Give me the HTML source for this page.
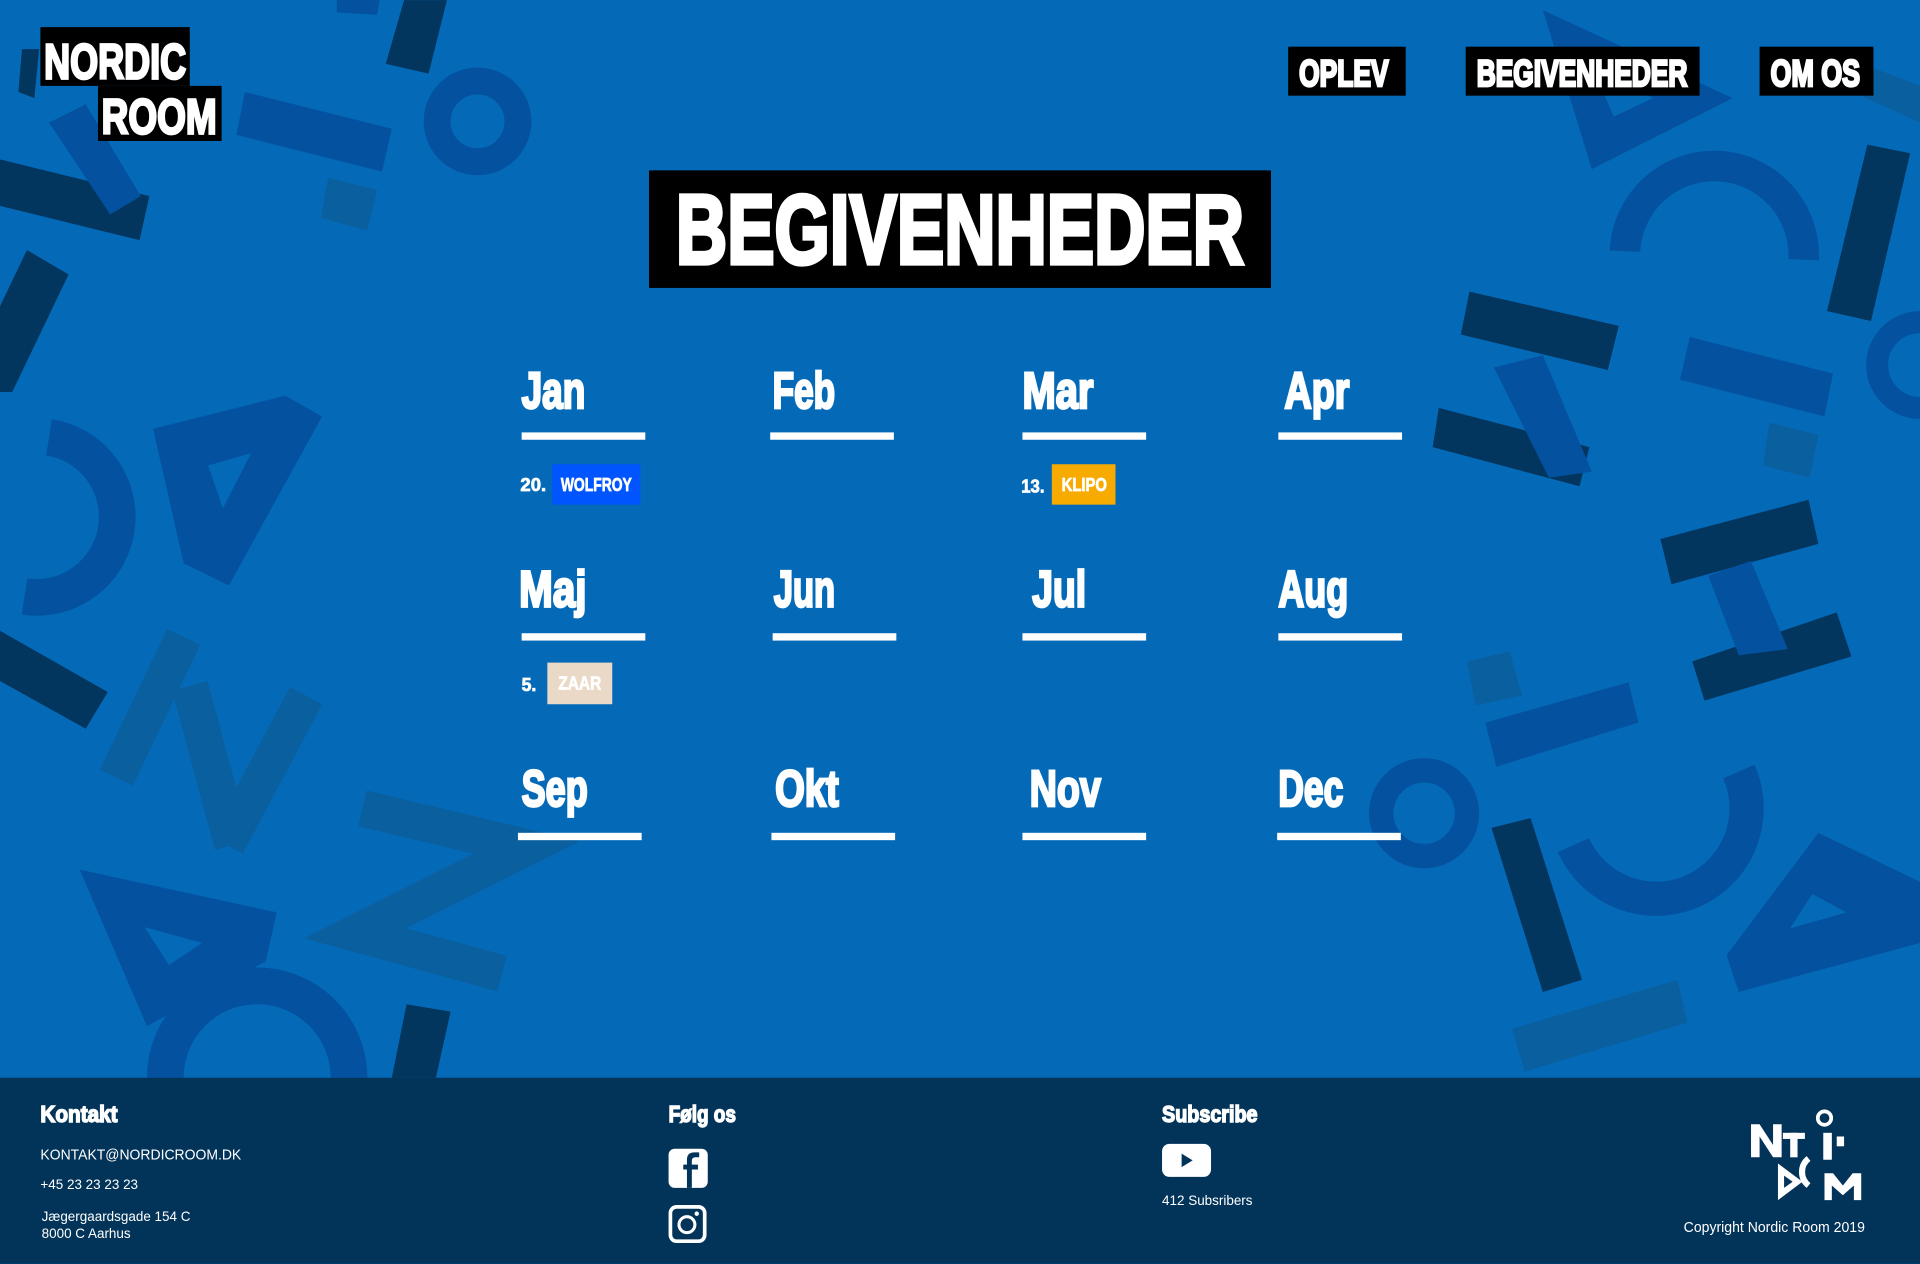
<!DOCTYPE html>
<html><head><meta charset="utf-8"><style>
html,body{margin:0;padding:0;width:1920px;height:1264px;overflow:hidden;background:#046ab8}
svg{display:block}
text{font-family:"Liberation Sans",sans-serif}
.b{font-weight:bold;fill:#fff;stroke:#fff;stroke-width:1.2;paint-order:stroke}
.h{stroke-width:2.2}
.s{stroke-width:0.6}
</style></head><body>
<svg width="1920" height="1264" viewBox="0 0 1568 1032" xmlns="http://www.w3.org/2000/svg">
<rect width="1568" height="1032" fill="#046ab8"/>
<g fill="#03365f">
<polygon points="330,0 365,0 350,60 315,52"/>
<polygon points="0,130 122,160 114,196 0,168"/>
<polygon points="22,204 56,224 10,320 0,320 0,250"/>
<polygon points="0,515 88,565 70,595 0,556"/>
<polygon points="332,820 368,826 356,880 320,880"/>
<polygon points="1525,118 1560,125 1528,262 1492,254"/>
<polygon points="1200,238 1322,266 1313,302 1193,273"/>
<polygon points="1175,333 1298,365 1290,397 1170,365"/>
<polygon points="1356,440 1477,408 1485,444 1365,477"/>
<polygon points="1382,540 1500,500 1512,536 1392,572"/>
<polygon points="1218,676 1250,668 1292,800 1260,810"/>
<polygon points="18,40 32,40 28,80 15,75"/>
</g>
<g fill="#04529f">
<polygon points="275,0 310,0 308,12 275,10"/>
<polygon points="200,75 320,105 312,140 193,110"/>
<polygon points="40,100 70,85 115,160 90,175"/>
<path fill-rule="evenodd" d="M125,350 L233,323 L263,340 L187,478 L150,460 Z M170,380 L205,370 L182,415 Z"/>
<path fill-rule="evenodd" d="M65,710 L226,745 L217,785 L120,838 Z M118,757 L165,770 L138,788 Z"/>
<path fill-rule="evenodd" d="M1260,8 L1415,80 L1300,138 Z M1300,55 L1350,80 L1318,95 Z"/>
<polygon points="1380,275 1497,305 1490,340 1372,310"/>
<polygon points="1213,590 1330,557 1338,590 1222,626"/>
<polygon points="1220,300 1260,290 1300,385 1265,390"/>
<polygon points="1395,470 1430,458 1460,530 1420,535"/>
<path fill-rule="evenodd" d="M1410,780 L1485,680 L1568,720 L1568,770 L1420,810 Z M1462,758 L1480,730 L1508,745 Z"/>
</g>
<g fill="none" stroke="#04529f">
<circle cx="390" cy="99" r="33" stroke-width="22"/>
<path d="M40,357 A65,65 0 0 1 20,487" stroke-width="30"/>
<path d="M135,880 A75,75 0 0 1 285,880" stroke-width="30"/>
<path d="M1327,205 A73,73 0 0 1 1473,212" stroke-width="25"/>
<circle cx="1568" cy="298" r="35" stroke-width="18"/>
<circle cx="1163" cy="664" r="35" stroke-width="20"/>
<path d="M1420,630 A70,70 0 0 1 1285,690" stroke-width="28"/>
</g>
<g fill="#0a5f9e">
<polygon points="268,145 308,155 300,188 262,178"/>
<polygon points="1445,345 1485,355 1478,390 1440,380"/>
<polygon points="1198,540 1233,532 1243,568 1205,576"/>
<polygon points="1490,40 1568,70 1568,100 1480,60"/>
<polygon points="1235,840 1370,800 1378,835 1245,875"/>
</g>
<g fill="none" stroke="#0a5f9e" stroke-width="30">
<path d="M150,520 L95,635"/><path d="M155,560 L190,690"/><path d="M250,568 L185,690"/>
<path d="M296,660 L430,692 L290,762 L410,795"/>
</g>

<rect x="33" y="22" width="122" height="48" fill="#000"/>
<rect x="80" y="70" width="101" height="45" fill="#000"/>
<text class="b h" x="36" y="64" font-size="40" textLength="116" lengthAdjust="spacingAndGlyphs">NORDIC</text>
<text class="b h" x="83" y="109" font-size="40" textLength="94" lengthAdjust="spacingAndGlyphs">ROOM</text>

<rect x="1052" y="38" width="96" height="40" fill="#000"/>
<text class="b h" x="1061" y="70" font-size="30" textLength="73" lengthAdjust="spacingAndGlyphs">OPLEV</text>
<rect x="1197" y="38" width="191" height="40" fill="#000"/>
<text class="b h" x="1206" y="70" font-size="30" textLength="172" lengthAdjust="spacingAndGlyphs">BEGIVENHEDER</text>
<rect x="1437" y="38" width="93" height="40" fill="#000"/>
<text class="b h" x="1446" y="70" font-size="30" textLength="73" lengthAdjust="spacingAndGlyphs">OM OS</text>

<rect x="530" y="139" width="508" height="96" fill="#000"/>
<text class="b" style="stroke-width:3.5" x="552" y="215" font-size="80" textLength="464" lengthAdjust="spacingAndGlyphs">BEGIVENHEDER</text>

<g>
<text class="b h" x="426" y="333" font-size="42" textLength="52" lengthAdjust="spacingAndGlyphs">Jan</text>
<text class="b h" x="631" y="333" font-size="42" textLength="51" lengthAdjust="spacingAndGlyphs">Feb</text>
<text class="b h" x="835" y="333" font-size="42" textLength="58" lengthAdjust="spacingAndGlyphs">Mar</text>
<text class="b h" x="1049" y="333" font-size="42" textLength="53" lengthAdjust="spacingAndGlyphs">Apr</text>
<text class="b h" x="424" y="495" font-size="42" textLength="55" lengthAdjust="spacingAndGlyphs">Maj</text>
<text class="b h" x="632" y="495" font-size="42" textLength="50" lengthAdjust="spacingAndGlyphs">Jun</text>
<text class="b h" x="843" y="495" font-size="42" textLength="44" lengthAdjust="spacingAndGlyphs">Jul</text>
<text class="b h" x="1044" y="495" font-size="42" textLength="57" lengthAdjust="spacingAndGlyphs">Aug</text>
<text class="b h" x="426" y="658" font-size="42" textLength="54" lengthAdjust="spacingAndGlyphs">Sep</text>
<text class="b h" x="633" y="658" font-size="42" textLength="52" lengthAdjust="spacingAndGlyphs">Okt</text>
<text class="b h" x="841" y="658" font-size="42" textLength="58" lengthAdjust="spacingAndGlyphs">Nov</text>
<text class="b h" x="1044" y="658" font-size="42" textLength="53" lengthAdjust="spacingAndGlyphs">Dec</text>
</g>
<g fill="#fff">
<rect x="426" y="353" width="101" height="6"/><rect x="629" y="353" width="101" height="6"/><rect x="835" y="353" width="101" height="6"/><rect x="1044" y="353" width="101" height="6"/>
<rect x="426" y="517" width="101" height="6"/><rect x="631" y="517" width="101" height="6"/><rect x="835" y="517" width="101" height="6"/><rect x="1044" y="517" width="101" height="6"/>
<rect x="423" y="680" width="101" height="6"/><rect x="630" y="680" width="101" height="6"/><rect x="835" y="680" width="101" height="6"/><rect x="1043" y="680" width="101" height="6"/>
</g>

<text class="b s" x="425" y="401" font-size="15" textLength="21" lengthAdjust="spacingAndGlyphs">20.</text>
<rect x="451" y="379" width="72" height="33" fill="#0055ff"/>
<text class="b s" x="458" y="401" font-size="15" textLength="58" lengthAdjust="spacingAndGlyphs">WOLFROY</text>
<text class="b s" x="834" y="402" font-size="15" textLength="19" lengthAdjust="spacingAndGlyphs">13.</text>
<rect x="859" y="379" width="52" height="33" fill="#f7aa00"/>
<text class="b s" x="867" y="401" font-size="15" textLength="37" lengthAdjust="spacingAndGlyphs">KLIPO</text>
<text class="b s" x="426" y="564" font-size="15" textLength="12" lengthAdjust="spacingAndGlyphs">5.</text>
<rect x="447" y="541" width="53" height="34" fill="#ead9c6"/>
<text class="b s" x="456" y="563" font-size="15" textLength="35" lengthAdjust="spacingAndGlyphs">ZAAR</text>

<rect x="0" y="880" width="1568" height="152" fill="#023359"/>
<text class="b" x="33" y="916" font-size="19" textLength="63" lengthAdjust="spacingAndGlyphs">Kontakt</text>
<g fill="#fff" font-size="12">
<text x="33" y="947" textLength="164" lengthAdjust="spacingAndGlyphs">KONTAKT@NORDICROOM.DK</text>
<text x="33" y="971" font-size="11">+45 23 23 23 23</text>
<text x="34" y="997" font-size="11">Jægergaardsgade 154 C</text>
<text x="34" y="1011" font-size="11">8000 C Aarhus</text>
<text x="949" y="984" font-size="11">412 Subsribers</text>
<text x="1375" y="1006" font-size="12" textLength="148" lengthAdjust="spacingAndGlyphs">Copyright Nordic Room 2019</text>
</g>
<text class="b" x="546" y="916" font-size="19" textLength="55" lengthAdjust="spacingAndGlyphs">Følg os</text>
<text class="b" x="949" y="916" font-size="19" textLength="78" lengthAdjust="spacingAndGlyphs">Subscribe</text>
<rect x="546" y="938" width="32" height="32" rx="5" fill="#fff"/>
<path d="M565,970 V955 H570 V951 H565 V948 Q565,945 568,945 H571 V941 H567 Q561,941 561,947 V951 H558 V955 H561 V970 Z" fill="#023359"/>
<rect x="547.5" y="985.5" width="28" height="28" rx="5" fill="none" stroke="#fff" stroke-width="3"/>
<circle cx="561" cy="1000" r="6.5" fill="none" stroke="#fff" stroke-width="2.5"/>
<circle cx="569" cy="991" r="1.8" fill="#fff"/>
<rect x="949" y="934" width="40" height="27" rx="6" fill="#fff"/>
<polygon points="965,942 965,953 974,947.5" fill="#023359"/>
<g fill="#fff">
<polygon points="1430,918 1437,918 1448,935 1448,918 1455,918 1455,945 1448,945 1437,928 1437,945 1430,945"/>
<rect x="1456" y="925" width="18" height="5"/><rect x="1462" y="925" width="6" height="20"/>
<rect x="1489" y="925" width="7" height="22"/><rect x="1500" y="928" width="6" height="8"/>
<path fill-rule="evenodd" d="M1452,950 L1472,965 L1452,980 Z M1457,960 L1464,965 L1457,970 Z"/>
<polygon points="1490,958 1497,958 1505,968 1513,958 1520,958 1520,980 1514,980 1514,968 1505,976 1496,968 1496,980 1490,980"/>
</g>
<circle cx="1490" cy="913" r="5.5" fill="none" stroke="#fff" stroke-width="3"/>
<path d="M1477,946 A14,14 0 0 0 1477,968" fill="none" stroke="#fff" stroke-width="5"/>
</svg>
</body></html>
